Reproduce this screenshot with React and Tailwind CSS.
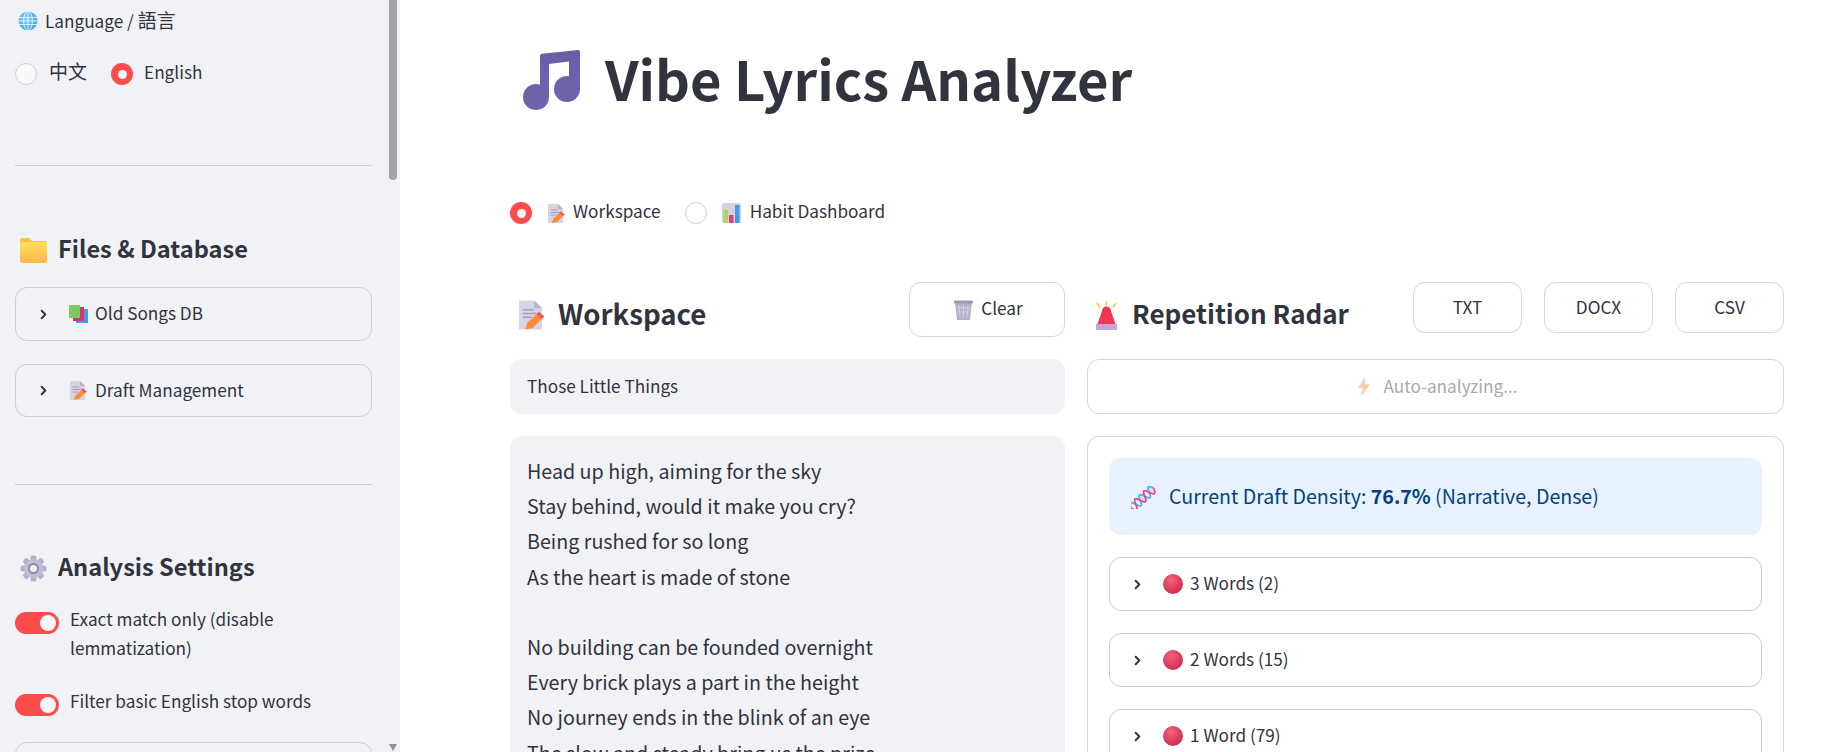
import React from "react";
import { ChevronRight } from "lucide-react";

const Globe = () => (
  <svg viewBox="0 0 20 20" className="w-[20px] h-[20px] shrink-0">
    <defs>
      <radialGradient id="globeFill" cx="0.4" cy="0.35" r="0.8">
        <stop offset="0" stopColor="#7fd0fb" />
        <stop offset="1" stopColor="#2f9cf0" />
      </radialGradient>
    </defs>
    <circle cx="10" cy="10" r="9.5" fill="url(#globeFill)" />
    <g fill="none" stroke="#d8f1fe" strokeWidth="1">
      <ellipse cx="10" cy="10" rx="4.5" ry="9.5" />
      <path d="M10 .5v19M1 6.5h18M.5 10h19M1 13.5h18" />
    </g>
  </svg>
);

const Folder = () => (
  <svg viewBox="0 0 27 25" className="w-[27px] h-[25px] shrink-0">
    <defs>
      <linearGradient id="folderFill" x1="0" y1="0" x2="0" y2="1">
        <stop offset="0" stopColor="#ffe05c" />
        <stop offset="1" stopColor="#ffb648" />
      </linearGradient>
    </defs>
    <path d="M0 2a2 2 0 0 1 2-2h7l3 3h13a2 2 0 0 1 2 2v4H0z" fill="#ffc23d" />
    <rect x="0" y="4" width="27" height="21" rx="2" fill="url(#folderFill)" />
  </svg>
);

const Books = () => (
  <svg viewBox="0 0 19 18" className="w-[19px] h-[18px] shrink-0 -mx-[1px]">
    <rect x="7" y="4" width="12" height="14" fill="#3f9df0" />
    <rect x="4" y="2" width="11" height="14" fill="#e0306f" />
    <rect x="0" y="0" width="11" height="13" rx="1" fill="#7cc95f" />
  </svg>
);

const Memo = ({ size = "w-[17px] h-[19px]" }) => (
  <svg viewBox="0 0 17 19" className={size + " shrink-0"}>
    <path d="M0 0h10l5 5v14H0z" fill="#d8d3e2" />
    <path d="M10 0l5 5h-5z" fill="#b9b2c9" />
    <path d="M2.5 6h7M2.5 8.5h9M2.5 11h6" stroke="#a69fb8" strokeWidth="1" />
    <path d="M13 7.5l3.5 3-7.5 7.5-5 1 1.5-4.5z" fill="#ff8a3c" />
    <path d="M13 7.5l3.5 3-1.5 1.5-3.5-3z" fill="#f3505e" />
  </svg>
);

const Gear = () => (
  <svg viewBox="0 0 27 27" className="w-[27px] h-[27px] shrink-0">
    <g fill="#b3afc6">
      {[0, 45, 90, 135].map((a) => (
        <rect key={a} x="10.5" y="0.5" width="6" height="26" rx="2.5" transform={`rotate(${a} 13.5 13.5)`} />
      ))}
    </g>
    <circle cx="13.5" cy="13.5" r="9.5" fill="#c0bcd2" />
    <circle cx="13.5" cy="13.5" r="5.5" fill="#8f8aa8" />
    <circle cx="13.5" cy="13.5" r="3.6" fill="#f0eff5" />
  </svg>
);

const MusicNote = () => (
  <svg viewBox="0 0 60 60" className="w-[60px] h-[60px] shrink-0">
    <defs>
      <linearGradient id="noteFill" x1="0" y1="0" x2="0" y2="1">
        <stop offset="0" stopColor="#6b5da6" />
        <stop offset="1" stopColor="#6f62b0" />
      </linearGradient>
    </defs>
    <path d="M17 6q0-2 2-2.300L55 0q2 0 2 2v38H46V11.500L26 14v33H17z" fill="url(#noteFill)" />
    <circle cx="13" cy="47" r="13" fill="#6f62ad" />
    <circle cx="44" cy="39" r="13" fill="#6f62ad" />
  </svg>
);

const ChartIcon = () => (
  <svg viewBox="0 0 19 20" className="w-[19px] h-[20px] shrink-0">
    <rect width="19" height="20" rx="2" fill="#d5d2dd" />
    <rect x="1.500" y="7" width="4.500" height="13" fill="#a5d66a" />
    <rect x="7" y="12" width="4.500" height="8" fill="#ef3b7c" />
    <rect x="13" y="2" width="4.500" height="18" fill="#3f9df0" />
  </svg>
);

const Basket = () => (
  <svg viewBox="0 0 19 20" className="w-[19px] h-[20px] shrink-0">
    <path d="M1 2h17l-2 18H3z" fill="#b5b1c8" />
    <path d="M5 5l1 13M9.500 5v13M14 5l-1 13M3 8h13M3.500 12h12" stroke="#d9d6e4" strokeWidth="0.8" />
    <rect x="0" y="0.500" width="19" height="3" rx="1" fill="#9d99b3" />
  </svg>
);

const Siren = () => (
  <svg viewBox="0 0 23 29" className="w-[23px] h-[29px] shrink-0">
    <path d="M2.500 23L7 10a4.500 4.500 0 0 1 9 0l4.500 13z" fill="#f2374f" />
    <rect x="1" y="23" width="21" height="6" fill="#c9a3dc" />
    <path d="M11.500 0v5M2 2l3 4.500M21 2l-3 4.500" stroke="#f6c945" strokeWidth="1.500" />
  </svg>
);

const Bolt = () => (
  <svg viewBox="0 0 12 19" className="w-[12px] h-[19px] shrink-0">
    <path d="M7 0L0 11h4.500L3.500 19 12 7.500H7z" fill="#fbcdb4" />
  </svg>
);

const Dna = () => (
  <svg viewBox="0 0 26 24" className="w-[26px] h-[24px] shrink-0">
    <g transform="rotate(-42 13 12)" fill="none">
      <path d="M3 9v6M7 9v6M11 8v8M15 8v8M19 9v6M23 9v6" stroke="#b9cfe9" strokeWidth="1" />
      <path d="M-4 12c2-6 4-6 6 0s4 6 6 0 4-6 6 0 4 6 6 0 4-6 6 0" stroke="#45b4f0" strokeWidth="1.800" />
      <path d="M-4 12c2 6 4 6 6 0s4-6 6 0 4 6 6 0 4-6 6 0 4 6 6 0" stroke="#f0447f" strokeWidth="1.800" />
    </g>
  </svg>
);

const Ball = () => (
  <svg viewBox="0 0 20 20" className="w-[20px] h-[20px] shrink-0">
    <defs>
      <radialGradient id="ballFill" cx="0.4" cy="0.3" r="0.8">
        <stop offset="0" stopColor="#f6607a" />
        <stop offset="1" stopColor="#c9264c" />
      </radialGradient>
    </defs>
    <circle cx="10" cy="10" r="10" fill="url(#ballFill)" />
  </svg>
);

function Radio({ checked, className = "" }) {
  return checked ? (
    <span className={"w-[22px] h-[22px] rounded-full bg-[#ff4b4b] flex items-center justify-center shrink-0 " + className}>
      <span className="w-[9px] h-[9px] rounded-full bg-[#f0f2f6]" />
    </span>
  ) : (
    <span className={"w-[22px] h-[22px] rounded-full border border-[#cfd0d3] shrink-0 " + className} />
  );
}

function Toggle() {
  return (
    <span className="w-[44px] h-[22px] mt-[8px] rounded-full bg-[#ff4b4b] flex items-center justify-end pr-[3px] shrink-0">
      <span className="w-[16px] h-[16px] rounded-full bg-[#f5f6f8]" />
    </span>
  );
}

function Expander({ icon, label, className, chevronGap = "gap-[19px]", iconGap = "gap-[8px]" }) {
  return (
    <div className={"flex items-center rounded-[12px] border border-[#cdced2] pl-[20px] " + chevronGap + " " + className}>
      <ChevronRight size={15} strokeWidth={3} className="shrink-0" />
      <div className={"flex items-center " + iconGap}>
        {icon}
        <span className="-mt-[2px]">{label}</span>
      </div>
    </div>
  );
}

function SideHeading({ icon, children, className }) {
  return (
    <div className={"flex items-center gap-[11px] h-[36px] pl-[5px] text-[23.600px] leading-[36px] font-semibold " + className}>
      {icon}
      <span className="-mt-[4px]">{children}</span>
    </div>
  );
}

const lyrics = [
  "Head up high, aiming for the sky",
  "Stay behind, would it make you cry?",
  "Being rushed for so long",
  "As the heart is made of stone",
  "",
  "No building can be founded overnight",
  "Every brick plays a part in the height",
  "No journey ends in the blink of an eye",
  "The slow and steady bring us the prize",
];

export default function App() {
  return (
    <div className="flex h-[752px] overflow-hidden bg-white text-[#31333f] text-[17.200px] leading-[26px] font-['Noto_Sans_CJK_TC','Noto_Sans_CJK_JP',sans-serif]">
      {/* Sidebar */}
      <aside className="relative w-[400px] shrink-0 h-full overflow-hidden bg-[#f0f2f6] pl-[15px] pt-[8px]">
        <div className="w-[357px]">
          <div className="flex items-center gap-[7px] pl-[3px] h-[26px]">
            <Globe />
            <span>Language / <span className="text-[19px] leading-none">語言</span></span>
          </div>
          <div className="flex items-center mt-[29px] h-[22px]">
            <Radio className="bg-[#f7f8fa]" />
            <span className="ml-[12px] -mt-[6px] text-[19px]">中文</span>
            <Radio checked className="ml-[24px]" />
            <span className="ml-[11px] -mt-[4px]">English</span>
          </div>
          <hr className="mt-[80px] border-[#cdced2]" />

          <SideHeading icon={<Folder />} className="mt-[66px]">Files &amp; Database</SideHeading>
          <Expander icon={<Books />} label="Old Songs DB" className="mt-[19px] h-[54px]" />
          <Expander icon={<Memo />} label="Draft Management" className="mt-[23px] h-[53px]" />
          <hr className="mt-[67px] border-[#cdced2]" />

          <SideHeading icon={<Gear />} className="mt-[65px]">Analysis Settings</SideHeading>
          <div className="flex gap-[11px] mt-[18px] leading-[29px]">
            <Toggle />
            <span>Exact match only (disable lemmatization)</span>
          </div>
          <div className="flex gap-[11px] mt-[24px] leading-[29px]">
            <Toggle />
            <span>Filter basic English stop words</span>
          </div>
          <div className="mt-[26px] h-[54px] rounded-[12px] border border-[#cdced2]" />
        </div>
        {/* scrollbar */}
        <div className="absolute top-0 right-[3px] w-[8px] h-[180px] rounded-b-full bg-[#a3a3a8]" />
        <div className="absolute bottom-[1px] right-[3px] w-0 h-0 border-x-[4.500px] border-x-transparent border-t-[7px] border-t-[#909095]" />
      </aside>

      {/* Main */}
      <main className="flex-1 min-w-0 pl-[110px]">
        <div className="flex items-center gap-[22px] mt-[50px] h-[60px] pl-[13px]">
          <MusicNote />
          <h1 className="text-[54.300px] leading-[60px] font-bold -mt-[4px]">Vibe Lyrics Analyzer</h1>
        </div>

        <div className="flex items-center mt-[92px] h-[22px]">
          <Radio checked />
          <span className="ml-[16px] flex"><Memo /></span>
          <span className="ml-[8px] -mt-[4px]">Workspace</span>
          <Radio className="ml-[24px]" />
          <span className="ml-[15px] flex"><ChartIcon /></span>
          <span className="ml-[9px] -mt-[4px]">Habit Dashboard</span>
        </div>

        <div className="grid grid-cols-[555px_697px] gap-[22px] mt-[58px]">
          {/* Workspace column */}
          <section className="flex flex-col gap-[22px]">
            <div className="flex items-start justify-between h-[55px]">
              <div className="flex items-center gap-[13px] pl-[9px] mt-[15px] h-[36px]">
                <Memo size="w-[26px] h-[30px]" />
                <h3 className="text-[27.600px] leading-[36px] font-semibold -mt-[4px]">Workspace</h3>
              </div>
              <button className="flex items-center justify-center gap-[8px] w-[156px] h-[55px] rounded-[12px] border border-[#d6d6d9] pl-[3px]">
                <Basket />
                <span className="-mt-[3px]">Clear</span>
              </button>
            </div>
            <div className="flex items-center h-[55px] rounded-[12px] bg-[#f0f2f6] px-[17px]"><span className="-mt-[2px]">Those Little Things</span></div>
            <div className="h-[400px] rounded-[12px] bg-[#f0f2f6] px-[17px] pt-[17px] text-[19.700px] leading-[35.200px]">
              {lyrics.map((line, i) => (
                <div key={i} className="h-[35.200px] whitespace-nowrap">{line}</div>
              ))}
            </div>
          </section>

          {/* Radar column */}
          <section className="flex flex-col gap-[22px]">
            <div className="flex items-start justify-between h-[55px]">
              <div className="flex items-center gap-[14px] pl-[8px] mt-[15px] h-[36px]">
                <Siren />
                <h3 className="text-[26px] leading-[36px] font-semibold -mt-[5px]">Repetition Radar</h3>
              </div>
              <div className="flex gap-[22px]">
                {["TXT", "DOCX", "CSV"].map((label) => (
                  <button key={label} className="w-[109px] h-[51px] rounded-[12px] border border-[#d6d6d9] pb-[2px]">{label}</button>
                ))}
              </div>
            </div>
            <div className="flex items-center justify-center gap-[13px] h-[55px] rounded-[12px] border border-[#d6d6d9] text-[#a9a9ae] pl-[5px]">
              <Bolt />
              <span className="-mt-[2px]">Auto-analyzing...</span>
            </div>
            <div className="h-[400px] rounded-[12px] border border-[#d6d6d9] p-[21px] flex flex-col gap-[22px]">
              <div className="flex items-center gap-[12px] h-[77px] shrink-0 rounded-[12px] bg-[#e8f2fe] pl-[22px] text-[#004280] text-[19.600px]">
                <Dna />
                <span className="-mt-[2px]">Current Draft Density: <strong className="font-bold">76.7%</strong> (Narrative, Dense)</span>
              </div>
              <Expander icon={<Ball />} label="3 Words (2)" className="h-[54px] shrink-0" chevronGap="gap-[18px]" iconGap="gap-[7px]" />
              <Expander icon={<Ball />} label="2 Words (15)" className="h-[54px] shrink-0" chevronGap="gap-[18px]" iconGap="gap-[7px]" />
              <Expander icon={<Ball />} label="1 Word (79)" className="h-[54px] shrink-0" chevronGap="gap-[18px]" iconGap="gap-[7px]" />
            </div>
          </section>
        </div>
      </main>
    </div>
  );
}
